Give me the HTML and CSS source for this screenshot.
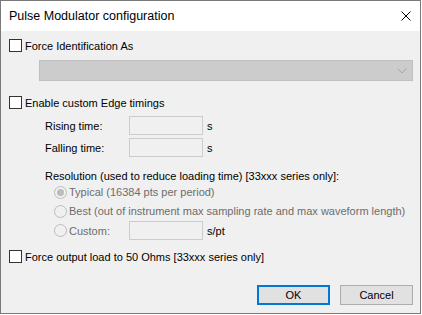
FILE: index.html
```html
<!DOCTYPE html>
<html lang="en">
  <head>
    <meta charset="UTF-8">
    <title>Pulse Modulator configuration</title>
    <link rel="stylesheet" href="styles.css">
  </head>
  <body>
    <div class="window">
      <header class="titlebar">
        <span class="title">Pulse Modulator configuration</span>
        <button class="close-btn" title="Close">
          <svg width="10" height="10" viewBox="0 0 10 10">
            <path d="M0.5 0.5 L9.5 9.5 M9.5 0.5 L0.5 9.5" stroke="#000" stroke-width="1" fill="none"/>
          </svg>
        </button>
      </header>
      <main class="dialog">
        <!-- Force identification -->
        <label class="row check-row first">
          <span class="checkbox"></span>Force Identification As
        </label>
        <div class="row combo-row">
          <div class="combo">
            <svg width="10" height="6" viewBox="0 0 10 6">
              <path d="M0.5 0.5 L5 5 L9.5 0.5" stroke="#a6a6a6" stroke-width="1" fill="none"/>
            </svg>
          </div>
        </div>

        <!-- Edge timings -->
        <label class="row check-row edge-row">
          <span class="checkbox"></span>Enable custom Edge timings
        </label>
        <div class="row field-row rising-row">
          <span class="field-label">Rising time:</span>
          <span class="textbox"></span>
          <span class="unit">s</span>
        </div>
        <div class="row field-row falling-row">
          <span class="field-label">Falling time:</span>
          <span class="textbox"></span>
          <span class="unit">s</span>
        </div>

        <!-- Resolution -->
        <div class="row res-label">Resolution (used to reduce loading time) [33xxx series only]:</div>
        <div class="row radio-row typical-row">
          <span class="radio selected"></span>Typical (16384 pts per period)
        </div>
        <div class="row radio-row best-row">
          <span class="radio"></span>Best (out of instrument max sampling rate and max waveform length)
        </div>
        <div class="row radio-row custom-row">
          <span class="radio"></span><span class="radio-label">Custom:</span>
          <span class="textbox"></span>
          <span class="unit">s/pt</span>
        </div>

        <!-- Output load -->
        <label class="row check-row load-row">
          <span class="checkbox"></span>Force output load to 50 Ohms [33xxx series only]
        </label>

        <div class="row button-row">
          <button class="btn default">OK</button>
          <button class="btn">Cancel</button>
        </div>
      </main>
    </div>
  </body>
</html>
```

FILE: styles.css
```css
* {
  box-sizing: border-box;
}
html, body {
  margin: 0;
  background: #ffffff;
}
.window {
  width: 421px;
  height: 314px;
  border: 1px solid #7a7a7a;
  display: flex;
  flex-direction: column;
  font-family: 'Liberation Sans', Arial, sans-serif;
  font-size: 11px;
  color: #000;
}
.titlebar {
  height: 30px;
  background: #ffffff;
  display: flex;
  align-items: center;
  justify-content: space-between;
  padding: 0 8px 0 8px;
}
.title {
  font-size: 12.5px;
}
.close-btn {
  border: none;
  background: none;
  padding: 0;
  width: 10px;
  height: 10px;
  margin-right: 1px;
  display: flex;
}
.dialog {
  flex-grow: 1;
  background: #f0f0f0;
  display: flex;
  flex-direction: column;
  padding: 8px 7px 0 8px;
}
.row {
  display: flex;
  align-items: center;
  white-space: nowrap;
}
.check-row {
  height: 13px;
}
.checkbox {
  width: 13px;
  height: 13px;
  border: 1px solid #333333;
  background: #ffffff;
  margin-right: 3px;
  flex-shrink: 0;
}
.combo-row {
  margin-top: 8px;
  height: 21px;
  padding-left: 30px;
}
.combo {
  width: 375px;
  height: 21px;
  background: #cccccc;
  border: 1px solid #bfbfbf;
  display: flex;
  align-items: center;
  justify-content: flex-end;
  padding-right: 5px;
}
.edge-row {
  margin-top: 15px;
}
.field-row {
  height: 19px;
  padding-left: 36px;
}
.rising-row {
  margin-top: 7px;
}
.falling-row {
  margin-top: 3px;
}
.field-label {
  width: 84px;
}
.textbox {
  width: 74px;
  height: 19px;
  border: 1px solid #cccccc;
  background: #f0f0f0;
  flex-shrink: 0;
}
.unit {
  margin-left: 4px;
}
.res-label {
  margin-top: 12px;
  height: 14px;
  padding-left: 36px;
}
.radio-row {
  height: 14px;
  padding-left: 45px;
  color: #6d6d6d;
}
.typical-row {
  margin-top: 2px;
}
.best-row {
  margin-top: 5px;
}
.custom-row {
  margin-top: 3px;
  height: 19px;
}
.custom-row .unit {
  color: #000;
}
.radio {
  width: 13px;
  height: 13px;
  border: 1px solid #bcbcbc;
  border-radius: 50%;
  background: #f0f0f0;
  margin-right: 2px;
  flex-shrink: 0;
  display: flex;
  align-items: center;
  justify-content: center;
}
.radio.selected::after {
  content: "";
  width: 7px;
  height: 7px;
  border-radius: 50%;
  background: #bcbcbc;
}
.radio-label {
  width: 60px;
}
.load-row {
  margin-top: 10px;
}
.button-row {
  margin-top: 22px;
  justify-content: flex-end;
  gap: 10px;
}
.btn {
  width: 73px;
  height: 20px;
  background: #e1e1e1;
  border: 1px solid #adadad;
  font-family: 'Liberation Sans', Arial, sans-serif;
  font-size: 11px;
  color: #000;
  padding: 0;
}
.btn.default {
  border: 2px solid #0078d7;
}
```
